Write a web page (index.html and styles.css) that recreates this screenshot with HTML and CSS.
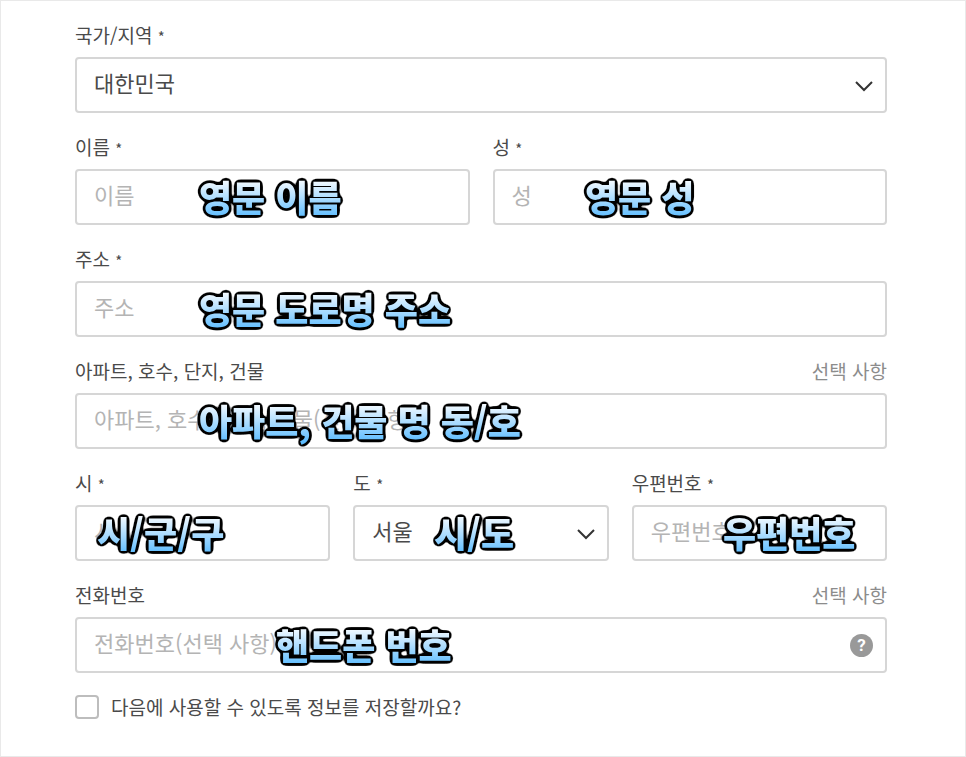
FILE: index.html
```html
<!DOCTYPE html>
<html lang="ko">
  <head>
    <meta charset="utf-8">
    <title>배송 주소</title>
    <link rel="stylesheet" href="styles.css">
  </head>
  <body>
    <svg class="defs" width="0" height="0" aria-hidden="true">
      <defs>
        <linearGradient id="sky" gradientUnits="userSpaceOnUse" x1="0" y1="8" x2="0" y2="46">
          <stop offset="0" stop-color="#f6fbff"/>
          <stop offset="1" stop-color="#5cbcff"/>
        </linearGradient>
        <!-- rounded black outline -->
        <filter id="outline" filterUnits="userSpaceOnUse" x="-10" y="-10" width="420" height="80" color-interpolation-filters="sRGB">
          <feGaussianBlur in="SourceAlpha" stdDeviation="2"/>
          <feComponentTransfer result="edge">
            <feFuncA type="linear" slope="12" intercept="-0.6"/>
          </feComponentTransfer>
          <feMerge>
            <feMergeNode in="edge"/>
            <feMergeNode in="SourceGraphic"/>
          </feMerge>
        </filter>
      </defs>
    </svg>

    <form class="address-form">
      <div class="field">
        <div class="field__head"><label for="country">국가/지역 <span class="req">*</span></label></div>
        <div class="field__box">
          <select id="country" class="control"><option>대한민국</option></select>
          <svg class="chevron" viewBox="0 0 18 12"><path d="M1 2l8 8 8-8"/></svg>
        </div>
      </div>

      <div class="row row--two">
        <div class="field">
          <div class="field__head"><label for="first">이름 <span class="req">*</span></label></div>
          <div class="field__box">
            <input id="first" class="control" type="text" placeholder="이름">
            <svg class="note note--far"><text x="4" y="40">영문 이름</text></svg>
          </div>
        </div>
        <div class="field">
          <div class="field__head"><label for="last">성 <span class="req">*</span></label></div>
          <div class="field__box">
            <input id="last" class="control" type="text" placeholder="성">
            <svg class="note note--last"><text x="4" y="40">영문 성</text></svg>
          </div>
        </div>
      </div>

      <div class="field">
        <div class="field__head"><label for="street">주소 <span class="req">*</span></label></div>
        <div class="field__box">
          <input id="street" class="control" type="text" placeholder="주소">
          <svg class="note note--far"><text x="4" y="40">영문 도로명 주소</text></svg>
        </div>
      </div>

      <div class="field">
        <div class="field__head"><label for="apt">아파트, 호수, 단지, 건물</label><span class="optional">선택 사항</span></div>
        <div class="field__box">
          <input id="apt" class="control" type="text" placeholder="아파트, 호수, 단지, 건물(선택 사항)">
          <svg class="note note--far"><text x="4" y="40">아파트, 건물 명 동/호</text></svg>
        </div>
      </div>

      <div class="row row--three">
        <div class="field">
          <div class="field__head"><label for="city">시 <span class="req">*</span></label></div>
          <div class="field__box">
            <input id="city" class="control" type="text" placeholder="시">
            <svg class="note note--city"><text x="4" y="40">시/군/구</text></svg>
          </div>
        </div>
        <div class="field">
          <div class="field__head"><label for="state">도 <span class="req">*</span></label></div>
          <div class="field__box">
            <select id="state" class="control"><option>서울</option></select>
            <svg class="chevron" viewBox="0 0 18 12"><path d="M1 2l8 8 8-8"/></svg>
            <svg class="note note--state"><text x="4" y="40">시/도</text></svg>
          </div>
        </div>
        <div class="field">
          <div class="field__head"><label for="zip">우편번호 <span class="req">*</span></label></div>
          <div class="field__box">
            <input id="zip" class="control" type="text" placeholder="우편번호">
            <svg class="note note--zip"><text x="4" y="40">우편번호</text></svg>
          </div>
        </div>
      </div>

      <div class="field">
        <div class="field__head"><label for="phone">전화번호</label><span class="optional">선택 사항</span></div>
        <div class="field__box">
          <input id="phone" class="control" type="tel" placeholder="전화번호(선택 사항)">
          <svg class="note note--phone"><text x="4" y="40">핸드폰 번호</text></svg>
          <button class="help" type="button">?</button>
        </div>
      </div>

      <div class="save">
        <input id="save" class="save__box" type="checkbox">
        <label for="save">다음에 사용할 수 있도록 정보를 저장할까요?</label>
      </div>
    </form>
  </body>
</html>
```
FILE: styles.css
```css
* {
  box-sizing: border-box;
}
body {
  margin: 0;
  min-height: 100vh;
  border: 1px solid #e9e9e9;
  background: #fff;
  color: #4a4a4a;
  font-family: "Noto Sans CJK KR", sans-serif;
  font-size: 19px;
  line-height: 28px;
}
.defs {
  position: absolute;
}
.address-form {
  display: flex;
  flex-direction: column;
  gap: 20px;
  padding: 20px 78px 0 74px;
}
.row {
  display: grid;
  gap: 23px;
}
.row--two {
  grid-template-columns: repeat(2, minmax(0, 1fr));
}
.row--three {
  grid-template-columns: repeat(3, minmax(0, 1fr));
}
.field__head {
  display: flex;
  justify-content: space-between;
  height: 28px;
  margin-bottom: 8px;
}
.req {
  font-size: 15px;
  line-height: 20px;
}
.optional {
  color: #8c8c8c;
}
.field__box {
  position: relative;
}
.control {
  display: block;
  width: 100%;
  height: 56px;
  padding: 0 17px 6px;
  border: 2px solid #d6d6d6;
  border-radius: 4px;
  background: #fff;
  color: #4a4a4a;
  font-family: inherit;
  font-size: 22px;
  appearance: none;
}
.control::placeholder {
  color: #b4b4b4;
  opacity: 1;
}
.chevron {
  position: absolute;
  right: 14px;
  top: 23px;
  width: 18px;
  height: 12px;
  fill: none;
  stroke: #333;
  stroke-width: 2;
  pointer-events: none;
}

/* chunky hints lying over the inputs */
.note {
  position: absolute;
  top: 3px;
  width: 120px;
  height: 50px;
  overflow: visible;
  pointer-events: none;
  font-size: 36px;
  font-weight: 900;
}
.note text {
  fill: url(#sky);
  filter: url(#outline);
}
.note--far {
  left: 120px;
}
.note--last {
  left: 88px;
}
.note--city {
  left: 18px;
}
.note--state {
  left: 77px;
}
.note--zip {
  left: 87px;
}
.note--phone {
  left: 197px;
}

.help {
  position: absolute;
  right: 14px;
  top: 17px;
  width: 23px;
  height: 23px;
  padding: 0;
  border: 0;
  border-radius: 50%;
  background: #999;
  color: #fff;
  font: bold 17px/23px Roboto, sans-serif;
}
.save {
  display: flex;
  align-items: center;
  gap: 12px;
}
.save__box {
  width: 24px;
  height: 24px;
  margin: 0;
  border: 2px solid #bdbdbd;
  border-radius: 4px;
  background: #fff;
  appearance: none;
}
```
